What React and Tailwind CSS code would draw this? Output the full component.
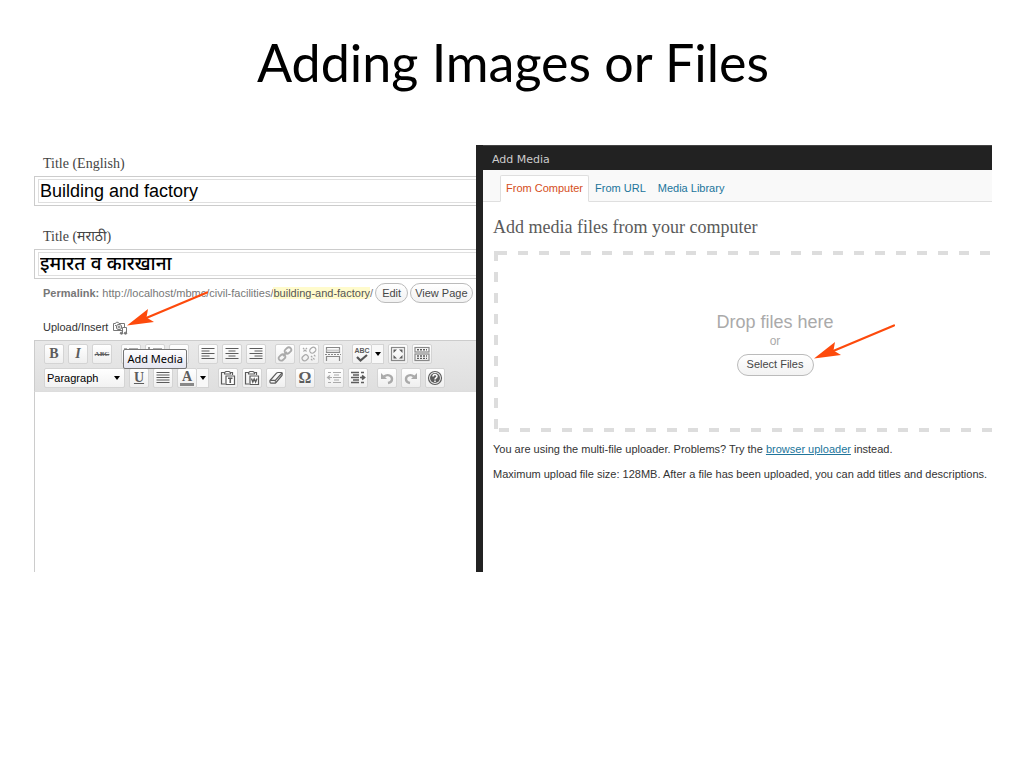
import { useState } from 'react'
import { clsx } from 'clsx'

// ── Icons ──────────────────────────────────────────────────
function Icon({ children, className }) {
  return (
    <svg
      viewBox="0 0 16 16"
      className={clsx('w-4 h-4 shrink-0', className)}
      fill="none"
      stroke="currentColor"
      strokeWidth="1.2"
      aria-hidden="true"
    >
      {children}
    </svg>
  )
}

const icons = {
  bullets: <path d="M6 3h9M6 8h9M6 13h9M1 3h3M1 8h3M1 13h3" />,
  numbers: <path d="M6 3h9M6 8h9M6 13h9M2 1v4M1 8h3M1 13h3" />,
  quote: <path d="M3 9h3v3H3V7l2-3M9 9h3v3H9V7l2-3" />,
  left: <path d="M1.5 2.5h13M1.5 5h8M1.5 7.5h13M1.5 10h8M1.5 12.5h13" />,
  center: <path d="M1.5 2.5h13M4.5 5h7M1.5 7.5h13M4.5 10h7M1.5 12.5h13" />,
  right: <path d="M1.5 2.5h13M6.5 5h8M1.5 7.5h13M6.5 10h8M1.5 12.5h13" />,
  justify: <path d="M1.5 2.5h13M1.5 5h13M1.5 7.5h13M1.5 10h13M1.5 12.5h13" />,
  link: (
    <g strokeWidth="1.8">
      <rect x="7.5" y="2" width="7" height="5" rx="2.5" transform="rotate(-42 11 4.5)" />
      <rect x="1.5" y="9" width="7" height="5" rx="2.5" transform="rotate(-42 5 11.5)" />
      <path d="M6 10l4-4" />
    </g>
  ),
  unlink: (
    <g>
      <rect x="8.5" y="1.5" width="6.5" height="5" rx="2.5" transform="rotate(-42 12 4)" />
      <rect x="1" y="9.5" width="6.5" height="5" rx="2.5" transform="rotate(-42 4 12)" />
      <path d="M2 2l4 4M6 2L2 6M10 10l4 4M10 13l2 2M13 9l2 2" strokeDasharray="2 1" />
    </g>
  ),
  more: (
    <g stroke="#888">
      <path d="M1.5 1.5h13v5h-13zM1.5 15v-4.5h13V15" />
      <path d="M1.5 4.5h13" strokeWidth="2" stroke="#ccc" />
      <path d="M0 8.5h16" strokeDasharray="2 1" />
    </g>
  ),
  fullscreen: (
    <g>
      <rect x="1.5" y="1.5" width="13" height="13" stroke="#888" />
      <path d="M3.5 3.5h3.5l-3.5 3.5zM12.5 3.5H9l3.5 3.5zM12.5 12.5H9l3.5-3.5zM3.5 12.5h3.5l-3.5-3.5z" fill="currentColor" stroke="none" />
    </g>
  ),
  kitchen: (
    <g>
      <rect x="1" y="1.5" width="14" height="4.5" stroke="#888" />
      <rect x="1" y="8" width="14" height="6.5" stroke="#888" />
      <path d="M3 3.8h10M3 10h10M3 12.4h10" strokeDasharray="2 1" strokeWidth="1.4" />
    </g>
  ),
  pasteText: (
    <g>
      <path d="M5 14H1.5V2.5H5M10 2.5h2.5V5M4.5 4V2.5l1.5-1h3l1.5 1V4z" />
      <path d="M6 6h8.5v8.5H6z" fill="#fff" />
      <path d="M8 8.3h4.5M10.25 8.3V13" strokeWidth="1.6" />
    </g>
  ),
  pasteWord: (
    <g>
      <path d="M5 14H1.5V2.5H5M10 2.5h2.5V5M4.5 4V2.5l1.5-1h3l1.5 1V4z" />
      <path d="M6 6h8.5v8.5H6z" fill="#fff" />
      <path d="M7.5 8.5l1.3 3.5 1.4-3 1.4 3L13 8.5" strokeWidth="1.4" />
    </g>
  ),
  eraser: (
    <g>
      <path d="M2 10.5L8.5 3.2Q9.2 2.5 10 2.5h3.2q1.3 0 1 1.5L14 5.5l-6 7q-.6.7-1.5.7H3.2q-1.6 0-1.2-2.7z" />
      <path d="M2.3 10.3h4.2q1 0 1 1.5M7.3 10.3L14 3" />
    </g>
  ),
  outdent: (
    <g>
      <path d="M2 2.5h3M7 2.5h8M8 5h5M8 10h5M2 12.5h3M7 12.5h8M7 7.5h8" />
      <path d="M1 7.5h5M4 5.5l-2.5 2L4 9.5" />
    </g>
  ),
  indent: (
    <g strokeWidth="1.7">
      <path d="M1 2.5h8M11 2.5h3M3 5h6M1 7.5h8M3 10h6M1 12.5h8M11 12.5h3" />
      <path d="M10 7.5h4M12 5.5l2.5 2-2.5 2" />
    </g>
  ),
  undo: (
    <g>
      <path d="M5 6.5c4-3 8-.5 8 2.5 0 2-1.5 3.5-4 4" strokeWidth="2.4" />
      <path d="M2 3v6h6z" fill="currentColor" stroke="none" />
    </g>
  ),
  redo: (
    <g>
      <path d="M11 6.5C7 3.5 3 6 3 9c0 2 1.5 3.5 4 4" strokeWidth="2.4" />
      <path d="M14 3v6H8z" fill="currentColor" stroke="none" />
    </g>
  ),
  help: (
    <g>
      <circle cx="8" cy="8" r="6.5" />
      <circle cx="8" cy="8" r="5" fill="currentColor" stroke="none" />
      <path d="M6 6.5C6 4 10 4 10 6.3 10 8 8 7.7 8 9.5M8 10.5v1.5" stroke="#fff" strokeWidth="1.5" />
    </g>
  ),
}

function MediaIcon() {
  return (
    <svg viewBox="0 0 15 14" className="block w-[15px] h-3.5" fill="none" stroke="#777" aria-hidden="true">
      <path d="M.5 2.5h2l.7-1.2h2L6 2.5h5.500v7H.5z" />
      <circle cx="6" cy="6" r="2.7" />
      <circle cx="6" cy="6" r="1" />
      <path d="M2 4.5h1" />
      <path d="M9.5 12V6.5h4V12" fill="#fff" />
      <ellipse cx="8.5" cy="12.2" rx="1.3" ry="1" fill="#777" />
      <ellipse cx="12.5" cy="12.2" rx="1.3" ry="1" fill="#777" />
    </svg>
  )
}

function Arrow({ className }) {
  return (
    <svg viewBox="0 0 82 36" className={clsx('absolute z-10 w-[82px] h-9 pointer-events-none', className)} aria-hidden="true">
      <path d="M80 1.5L18 27.5" stroke="#fd4a0c" strokeWidth="2.2" strokeLinecap="round" />
      <path d="M0 34.5L21 18l-1.5 8.5L27 31z" fill="#fd4a0c" />
    </svg>
  )
}

// ── Toolbar pieces ─────────────────────────────────────────
const toolClass =
  'flex h-5 w-5 shrink-0 items-center justify-center rounded-xs border border-[#d4d4d4] bg-linear-to-b from-white to-[#efefef] text-[#5c5c5c]'

function Tool({ label, icon, faded, children }) {
  return (
    <button type="button" aria-label={label} className={toolClass}>
      {icon ? <Icon className={faded ? 'text-[#aaa]' : ''}>{icons[icon]}</Icon> : children}
    </button>
  )
}

function Caret() {
  return <span className="border-x-3 border-t-4 border-x-transparent border-t-black" />
}

function SplitTool({ label, children }) {
  return (
    <div className="flex">
      <button type="button" aria-label={label} className={toolClass}>{children}</button>
      <button
        type="button"
        aria-label={`${label} options`}
        className="flex h-5 w-3 items-center justify-center border border-l-0 border-[#d4d4d4] bg-[#f8f8f8]"
      >
        <Caret />
      </button>
    </div>
  )
}

function Group({ children }) {
  return <div className="flex shrink-0 gap-1">{children}</div>
}

function Toolbar() {
  return (
    <div className="flex flex-col gap-1 overflow-hidden border-y border-l border-t-[#ccc] border-b-[#ddd] border-l-[#ccc] bg-linear-to-b from-[#e9e9e9] to-[#dfdfdf] py-[3px] pl-[9px]">
      <div className="flex gap-[9px]">
        <Group>
          <Tool label="Bold"><b className="font-['Liberation_Serif',serif] text-sm">B</b></Tool>
          <Tool label="Italic"><b className="font-['Liberation_Serif',serif] text-sm italic">I</b></Tool>
          <Tool label="Strikethrough">
            <b className="font-['Liberation_Serif',serif] text-[7px] line-through">ABC</b>
          </Tool>
        </Group>
        <Group>
          <Tool label="Bulleted list" icon="bullets" />
          <Tool label="Numbered list" icon="numbers" />
          <Tool label="Blockquote" icon="quote" />
        </Group>
        <Group>
          <Tool label="Align left" icon="left" />
          <Tool label="Align center" icon="center" />
          <Tool label="Align right" icon="right" />
        </Group>
        <Group>
          <Tool label="Insert link" icon="link" faded />
          <Tool label="Unlink" icon="unlink" faded />
          <Tool label="Insert more tag" icon="more" />
        </Group>
        <Group>
          <SplitTool label="Spellcheck">
            <span className="flex flex-col items-center">
              <b className="text-[7px] leading-[7px]">ABC</b>
              <svg viewBox="0 0 12 8" className="h-2 w-3" fill="none" stroke="#555" strokeWidth="2.2" aria-hidden="true">
                <path d="M1 3l3.5 3.5L11 1" />
              </svg>
            </span>
          </SplitTool>
          <Tool label="Fullscreen" icon="fullscreen" />
          <Tool label="Kitchen sink" icon="kitchen" />
        </Group>
      </div>
      <div className="flex gap-[9px]">
        <Group>
          <button
            type="button"
            className="flex h-5 w-[81px] items-center justify-between rounded-xs border border-[#d4d4d4] bg-linear-to-b from-white to-[#f2f2f2] pr-1 pl-0.5 text-[11px] text-black"
          >
            Paragraph
            <Caret />
          </button>
          <Tool label="Underline"><b className="font-['Liberation_Serif',serif] text-sm leading-4 underline">U</b></Tool>
          <Tool label="Justify" icon="justify" />
          <SplitTool label="Text color">
            <b className="border-b-3 border-[#888] px-0.5 font-['Liberation_Serif',serif] text-sm leading-3">A</b>
          </SplitTool>
        </Group>
        <Group>
          <Tool label="Paste as text" icon="pasteText" />
          <Tool label="Paste from Word" icon="pasteWord" />
          <Tool label="Remove formatting" icon="eraser" />
        </Group>
        <Group>
          <Tool label="Special character"><b className="font-['Liberation_Serif',serif] text-base leading-4">Ω</b></Tool>
        </Group>
        <Group>
          <Tool label="Outdent" icon="outdent" faded />
          <Tool label="Indent" icon="indent" />
        </Group>
        <Group>
          <Tool label="Undo" icon="undo" faded />
          <Tool label="Redo" icon="redo" faded />
          <Tool label="Help" icon="help" />
        </Group>
      </div>
    </div>
  )
}

// ── Editor ─────────────────────────────────────────────────
function TitleField({ id, label, value, onChange, className, inputClassName }) {
  return (
    <div className={className}>
      <label
        htmlFor={id}
        className="mb-0.5 block pl-[9px] font-['Liberation_Serif','Noto_Sans_Devanagari',serif] text-sm leading-5 text-[#444]"
      >
        {label}
      </label>
      <div className="border border-r-0 border-[#ccc] py-0.5 pl-[3px]">
        <input
          id={id}
          value={value}
          onChange={(e) => onChange(e.target.value)}
          className={clsx(
            'block h-6 w-full border border-r-0 border-[#dfdfdf] bg-white pl-px text-black outline-none',
            inputClassName
          )}
        />
      </div>
    </div>
  )
}

function PillButton({ children, className }) {
  return (
    <button
      type="button"
      className={clsx(
        'flex shrink-0 items-center justify-center rounded-full border border-[#bbb] bg-linear-to-b from-white to-[#f2f2f2] text-[11px] whitespace-nowrap text-[#464646]',
        className
      )}
    >
      {children}
    </button>
  )
}

function Editor() {
  const [english, setEnglish] = useState('Building and factory')
  const [marathi, setMarathi] = useState('इमारत व कारखाना')

  return (
    <section className="flex min-w-0 flex-col">
      <TitleField
        id="title-en"
        label="Title (English)"
        value={english}
        onChange={setEnglish}
        className="pt-[9px]"
        inputClassName="text-lg"
      />
      <TitleField
        id="title-mr"
        label="Title (मराठी)"
        value={marathi}
        onChange={setMarathi}
        className="pt-[21px]"
        inputClassName="text-[19px] font-medium"
      />

      <div className="flex items-center gap-0.5 pt-1 pl-[9px] text-[11px] whitespace-nowrap text-[#777]">
        <span>
          <b>Permalink:</b> http://localhost/mbmc/civil-facilities/
          <span className="bg-[#fffbcc] text-[#555]">building-and-factory</span>/
        </span>
        <PillButton className="h-5 px-1.5">Edit</PillButton>
        <PillButton className="h-5 px-1">View Page</PillButton>
      </div>

      <div className="flex h-[37px] items-center gap-[5px] pt-3.5 pb-0.5 pl-[9px] text-[11px] text-[#333]">
        Upload/Insert
        <button type="button" aria-label="Add media" aria-describedby="media-tip" className="relative">
          <MediaIcon />
          <Arrow className="bottom-2 left-3.5" />
          <span
            id="media-tip"
            role="tooltip"
            className="absolute top-7 left-2.5 z-10 rounded-xs border border-[#767676] bg-linear-to-b from-white to-[#e4e5f0] px-[3px] font-['Noto_Sans',sans-serif] text-[11px] leading-[18px] whitespace-nowrap text-black"
          >
            Add Media
          </span>
        </button>
      </div>

      <Toolbar />
      <textarea
        aria-label="Content"
        className="block min-h-[180px] w-full grow resize-none border-l border-[#ccc] bg-white p-2 outline-none"
      />
    </section>
  )
}

// ── Add media dialog ───────────────────────────────────────
const tabs = ['From Computer', 'From URL', 'Media Library']

function AddMedia() {
  const [active, setActive] = useState(tabs[0])

  return (
    <section className="flex min-w-0 flex-col border-l-[7px] border-[#222] bg-white">
      <h2 className="border-t border-[#444] bg-[#222] pt-1 pl-[9px] font-['DejaVu_Sans',sans-serif] text-[11px] leading-5 text-[#ccc]">
        Add Media
      </h2>

      <nav className="flex h-8 items-end border-b border-[#dfdfdf] bg-[#f9f9f9] pl-[17px]">
        {tabs.map((tab) => (
          <a
            key={tab}
            href="#"
            onClick={() => setActive(tab)}
            className={clsx(
              '-mb-px border px-[5px] text-[11px] leading-[25px]',
              tab === active
                ? 'rounded-t-xs border-[#dfdfdf] border-b-white bg-white text-[#d54e21]'
                : 'border-transparent text-[#21759b]'
            )}
          >
            {tab}
          </a>
        ))}
      </nav>

      <div className="flex flex-col pt-[13px] pl-2.5 text-[11px] text-[#333]">
        <h3 className="font-['Liberation_Serif',serif] text-lg leading-6 text-[#5a5a5a]">
          Add media files from your computer
        </h3>

        {/* Drop zone */}
        <div className="relative mt-3 ml-px flex h-[181px] flex-col items-center justify-center pt-1 pl-16 text-[#aaa]">
          <span className="absolute top-0 right-0 left-[3px] h-1 bg-[repeating-linear-gradient(90deg,#ddd_0_10px,transparent_10px_21px)]" />
          <span className="absolute right-0 bottom-0 left-[5px] h-1 bg-[repeating-linear-gradient(90deg,#ddd_0_10px,transparent_10px_21px)]" />
          <span className="absolute inset-y-0 left-0 w-1 bg-[repeating-linear-gradient(180deg,#ddd_0_10px,transparent_10px_21px)]" />
          <p className="text-lg leading-5">Drop files here</p>
          <p className="text-xs leading-[18px]">or</p>
          <div className="relative mt-1">
            <PillButton className="h-[22px] w-[77px]">Select Files</PillButton>
            <Arrow className="bottom-4 left-full" />
          </div>
        </div>

        <p className="pt-[9px] leading-4">
          You are using the multi-file uploader. Problems? Try the{' '}
          <a href="#" className="text-[#21759b] underline">browser uploader</a> instead.
        </p>
        <p className="pt-[9px] leading-4">
          Maximum upload file size: 128MB. After a file has been uploaded, you can add titles and descriptions.
        </p>
      </div>
    </section>
  )
}

export default function App() {
  return (
    <main className="min-h-screen bg-white pt-[30px] pr-8 pb-8 pl-[34px] font-['Liberation_Sans','Noto_Sans_Devanagari',sans-serif]">
      <h1 className="text-center font-['Lato',sans-serif] text-[52px] leading-16 text-black">Adding Images or Files</h1>
      <div className="mt-[51px] grid grid-cols-[442fr_516fr]">
        <Editor />
        <AddMedia />
      </div>
    </main>
  )
}
